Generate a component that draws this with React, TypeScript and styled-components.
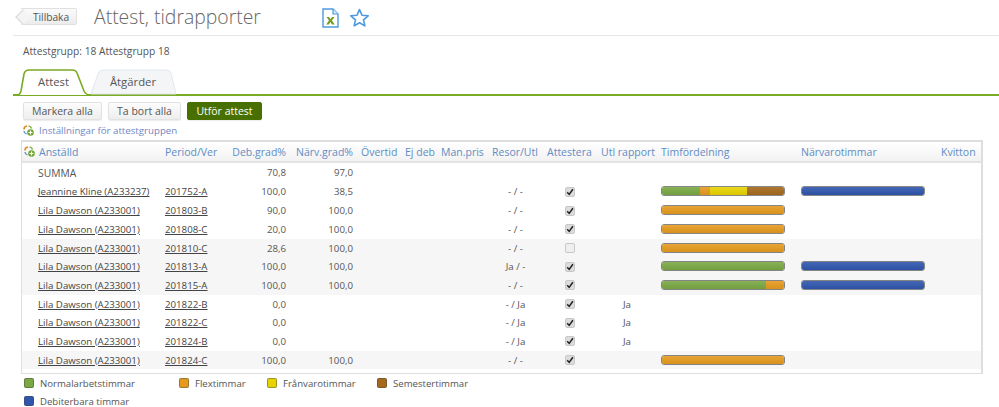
import React from "react";
import styled, { createGlobalStyle } from "styled-components";

const Global = createGlobalStyle`
  html, body { margin: 0; padding: 0; background: #fff; }
  body { font-family: "Open Sans", "Liberation Sans", sans-serif; color: #555; overflow: hidden; }
`;
const Page = styled.div`
  width: 999px; height: 407px; overflow: hidden; display: flex; flex-direction: column; padding-left: 13px; box-sizing: border-box;
  & > * { flex-shrink: 0; }
`;
const Header = styled.header`
  height: 36px; box-sizing: border-box; border-bottom: 1px solid #e6e6e6; display: flex; align-items: center; padding-left: 8px;
`;
const BackButton = styled.button`
  position: relative; width: 56px; height: 17px; margin: 0 17px 2px 0; padding: 0 0 0 5px; border: 1px solid #e0e0e0; border-left: none; border-radius: 0 2px 2px 0;
  background: linear-gradient(#fbfbfb, #ececec); font: 10.2px "Open Sans", sans-serif; color: #555;
  &::before { content: ""; position: absolute; left: -4px; top: 2px; width: 11px; height: 11px; border-left: 1px solid #d6d6d6; border-bottom: 1px solid #d6d6d6; background: #f4f4f4; transform: rotate(45deg) scale(.9); z-index: 0; }
  span { position: relative; }
`;
const Title = styled.h1`
  margin: 0 0 1px; width: 228px; font: 300 19.4px/28px "Open Sans", sans-serif; color: #666; white-space: nowrap;
`;
const HeaderIcon = styled.svg<{ $gap?: number }>`
  display: block; margin-right: ${p => p.$gap ?? 0}px;
`;
const GroupLine = styled.div`
  height: 33px; padding: 8px 0 0 10px; box-sizing: border-box; font-size: 10.2px; line-height: 14px; color: #555;
`;
const TabBar = styled.div`
  display: flex; height: 27px; border-bottom: 2px solid #7aab24; box-sizing: border-box;
`;
const Tab = styled.div<{ $active?: boolean }>`
  position: relative; width: ${p => (p.$active ? "78px" : "86px")}; height: 27px; display: flex; align-items: center; justify-content: center;
  font-size: 11.3px; color: #555; padding: ${p => (p.$active ? "0 0 2px 3px" : "0 0 2px 0")}; box-sizing: border-box; margin-left: ${p => (p.$active ? "0" : "-1px")};
  span { position: relative; }
  svg { position: absolute; left: 0; top: 0; }
`;
const Toolbar = styled.div`
  display: flex; gap: 6px; padding: 6px 0 0 10px; height: 18px;
`;
const ActionButton = styled.button<{ $w: number; $primary?: boolean }>`
  width: ${p => p.$w}px; height: 18px; padding: 0; border-radius: 2px; font: 10.5px "Open Sans", sans-serif;
  border: 1px solid ${p => (p.$primary ? "#477000" : "#e2e2e2")};
  color: ${p => (p.$primary ? "#fff" : "#555")};
  background: ${p => (p.$primary ? "#477000" : "linear-gradient(#fcfcfc, #eeeeee)")};
  box-shadow: 0 1px 1px rgba(0,0,0,.08);
`;
const SettingsLink = styled.div`
  display: flex; align-items: center; gap: 5px; padding-left: 10px; height: 19px; margin-top: 1px; font-size: 9.7px; color: #6f87c4;
`;
const Table = styled.div`
  width: 962px; margin: 0 0 0 8px; border: 1px solid #dedede; border-top-width: 2px; border-right-width: 2px; box-sizing: border-box; height: 234px;
`;
const columns = "143px 63px 62px 67px 44px 36px 51px 55px 54px 60px 140px 140px 1fr";
const HeadRow = styled.div`
  display: grid; grid-template-columns: ${columns}; height: 21px; align-items: center; border-bottom: 2px solid #e4e4e4; background: linear-gradient(#ffffff, #f2f2f2);
  font-size: 10.5px; color: #5f8cc4; box-sizing: border-box;
`;
const Row = styled.div<{ $shaded?: boolean; $sum?: boolean }>`
  display: grid; grid-template-columns: ${columns}; height: ${p => (p.$sum ? "19.6px" : "18.7px")}; align-items: center; background: ${p => (p.$shaded ? "#f6f6f6" : "#fff")};
  font-size: 9.7px; color: #555;
`;
const Cell = styled.div<{ $align?: "left" | "right" | "center" }>`
  padding: 0 4px; text-align: ${p => p.$align ?? "left"}; white-space: nowrap; box-sizing: border-box; min-width: 0;
`;
const NameCell = styled(Cell)`
  padding-left: 16px; display: flex; align-items: center; gap: 4px;
`;
const HeadName = styled(NameCell)`
  padding-left: 2px;
`;
const PeriodCell = styled(Cell)`
  padding-left: 0;
`;
const SumLabel = styled(Cell)`
  padding-left: 16px; font-size: 10.3px;
`;
const RowLink = styled.a`
  color: #444; text-decoration: underline;
`;
const Box = styled.span<{ $checked?: boolean }>`
  display: block; width: 10px; height: 10px; margin: 0 auto; border-radius: 2px; border: 1px solid #c8c8c8; background: ${p => (p.$checked ? "#dcdcdc" : "#efefef")}; box-sizing: border-box; position: relative;
  svg { position: absolute; left: 0; top: 0; }
`;
const Bar = styled.div`
  display: flex; width: 124px; height: 10px; border-radius: 3px; overflow: hidden; border: 1px solid rgba(70,70,70,.65); box-sizing: border-box; margin-top: -1px;
`;
const Seg = styled.div<{ $c: string }>`
  background: ${p => p.$c}; background-image: linear-gradient(rgba(255,255,255,.1), rgba(0,0,0,.06)); height: 100%;
`;
const Legend = styled.div`
  display: grid; grid-template-columns: 155px 88px 110px 1fr; grid-auto-rows: 18px; padding-left: 11px; align-items: center; font-size: 9.6px; color: #555; height: 36px;
`;
const LegendItem = styled.div`
  display: flex; align-items: center; gap: 6px;
`;
const Swatch = styled.span<{ $c: string }>`
  width: 10px; height: 10px; border-radius: 2px; background: ${p => p.$c}; border: 1px solid rgba(70,70,70,.45); box-sizing: border-box; display: block;
`;

const G = "#7aa843", O = "#e59a1e", Y = "#e8d300", B = "#a5691c", N = "#2f55ad";
type S = [string, number];
type RowData = { name: string; period: string; deb: string; narv: string; resor: string; check: boolean; utl?: string; tim?: S[]; nar?: boolean; shaded?: boolean };
const L = "Lila Dawson (A233001)";
const rows: RowData[] = [
  { name: "Jeannine Kline (A233237)", period: "201752-A", deb: "100,0", narv: "38,5", resor: "- / -", check: true, tim: [[G, 31], [O, 8], [Y, 30.5], [B, 30.5]], nar: true },
  { name: L, period: "201803-B", deb: "90,0", narv: "100,0", resor: "- / -", check: true, tim: [[O, 100]] },
  { name: L, period: "201808-C", deb: "20,0", narv: "100,0", resor: "- / -", check: true, tim: [[O, 100]] },
  { name: L, period: "201810-C", deb: "28,6", narv: "100,0", resor: "- / -", check: false, tim: [[O, 100]], shaded: true },
  { name: L, period: "201813-A", deb: "100,0", narv: "100,0", resor: "Ja / -", check: true, tim: [[G, 100]], nar: true, shaded: true },
  { name: L, period: "201815-A", deb: "100,0", narv: "100,0", resor: "- / -", check: true, tim: [[G, 85], [O, 15]], nar: true, shaded: true },
  { name: L, period: "201822-B", deb: "0,0", narv: "", resor: "- / Ja", check: true, utl: "Ja" },
  { name: L, period: "201822-C", deb: "0,0", narv: "", resor: "- / Ja", check: true, utl: "Ja" },
  { name: L, period: "201824-B", deb: "0,0", narv: "", resor: "- / Ja", check: true, utl: "Ja" },
  { name: L, period: "201824-C", deb: "100,0", narv: "100,0", resor: "- / -", check: true, tim: [[O, 100]], shaded: true },
];

const SettingsIcon = () => (
  <svg width="11" height="11" viewBox="0 0 11 11">
    <path d="M1 4.5A3.5 3.5 0 0 1 4 1" fill="none" stroke="#e08a2a" strokeWidth="1.6" />
    <path d="M5.5 1A3.5 3.5 0 0 1 8.6 3.5" fill="none" stroke="#8fb24a" strokeWidth="1.6" />
    <path d="M1 6A3.5 3.5 0 0 0 3.5 9" fill="none" stroke="#6f9fd0" strokeWidth="1.6" />
    <circle cx="7.5" cy="7.5" r="3.3" fill="#6fa52c" />
    <path d="M7.5 5.5v4M5.5 7.5h4" stroke="#fff" strokeWidth="1.2" />
  </svg>
);
const Check = () => (
  <svg width="8" height="8" viewBox="0 0 8 8"><path d="M1.2 4.2 3.2 6.4 6.9 1.2" fill="none" stroke="#222" strokeWidth="1.5" /></svg>
);
const Meter = ({ segs }: { segs: S[] }) => (
  <Bar>{segs.map(([c, w], i) => <Seg key={i} $c={c} style={{ width: `${w}%` }} />)}</Bar>
);

export default function App() {
  return (
    <Page>
      <Global />
      <Header>
        <BackButton><span>Tillbaka</span></BackButton>
        <Title>Attest, tidrapporter</Title>
        <HeaderIcon $gap={10} width="17" height="20" viewBox="0 0 17 20">
          <path d="M1 1h10l5 5v13H1z" fill="#fff" stroke="#4d9ae0" strokeWidth="1.4" />
          <path d="M11 1v5h5" fill="#dcebf8" stroke="#4d9ae0" strokeWidth="1.2" />
          <path d="M4.5 9h2.6l1.4 2.3L10 9h2.5l-2.6 3.6 2.8 3.9H10l-1.6-2.5-1.6 2.5H4.2L7 12.6z" fill="#6f9e1e" />
        </HeaderIcon>
        <HeaderIcon width="21" height="20" viewBox="0 0 21 20">
          <path d="M10.5 1.6 13 7.2l6.2.6-4.7 4.1 1.4 6-5.4-3.2-5.4 3.2 1.4-6L1.8 7.8 8 7.2z" fill="#fff" stroke="#4d9ae0" strokeWidth="1.6" strokeLinejoin="round" />
        </HeaderIcon>
      </Header>
      <GroupLine>Attestgrupp: 18 Attestgrupp 18</GroupLine>
      <TabBar>
        <Tab $active>
          <svg width="78" height="27" viewBox="0 0 78 27">
            <path d="M0 26H4Q7 26 8 22L11 5Q12 1 16 1H59Q63 1 64 4L71 22Q73 26 77 26H78" fill="#fff" stroke="#7aab24" strokeWidth="1.6" />
          </svg>
          <span>Attest</span>
        </Tab>
        <Tab>
          <svg width="86" height="26" viewBox="0 0 86 26">
            <path d="M1 25 L8 5Q9 1 13 1H76Q80 1 81 4L86 25z" fill="#f3f5f7" stroke="#e2e8ee" />
          </svg>
          <span>Åtgärder</span>
        </Tab>
      </TabBar>
      <Toolbar>
        <ActionButton $w={79}>Markera alla</ActionButton>
        <ActionButton $w={73}>Ta bort alla</ActionButton>
        <ActionButton $w={75} $primary>Utför attest</ActionButton>
      </Toolbar>
      <SettingsLink><SettingsIcon />Inställningar för attestgruppen</SettingsLink>
      <Table>
        <HeadRow>
          <HeadName><SettingsIcon />Anställd</HeadName>
          <PeriodCell>Period/Ver</PeriodCell>
          <Cell $align="right">Deb.grad%</Cell>
          <Cell $align="right">Närv.grad%</Cell>
          <Cell>Övertid</Cell>
          <Cell>Ej deb</Cell>
          <Cell>Man.pris</Cell>
          <Cell>Resor/Utl</Cell>
          <Cell>Attestera</Cell>
          <Cell>Utl rapport</Cell>
          <Cell>Timfördelning</Cell>
          <Cell>Närvarotimmar</Cell>
          <Cell>Kvitton</Cell>
        </HeadRow>
        <Row $sum>
          <SumLabel>SUMMA</SumLabel>
          <Cell />
          <Cell $align="right">70,8</Cell>
          <Cell $align="right">97,0</Cell>
        </Row>
        {rows.map((r, i) => (
          <Row key={i} $shaded={r.shaded}>
            <NameCell><RowLink>{r.name}</RowLink></NameCell>
            <PeriodCell><RowLink>{r.period}</RowLink></PeriodCell>
            <Cell $align="right">{r.deb}</Cell>
            <Cell $align="right">{r.narv}</Cell>
            <Cell /><Cell /><Cell />
            <Cell $align="center">{r.resor}</Cell>
            <Cell $align="center"><Box $checked={r.check}>{r.check && <Check />}</Box></Cell>
            <Cell $align="center">{r.utl}</Cell>
            <Cell>{r.tim && <Meter segs={r.tim} />}</Cell>
            <Cell>{r.nar && <Meter segs={[[N, 100]]} />}</Cell>
            <Cell />
          </Row>
        ))}
      </Table>
      <Legend>
        <LegendItem><Swatch $c={G} />Normalarbetstimmar</LegendItem>
        <LegendItem><Swatch $c={O} />Flextimmar</LegendItem>
        <LegendItem><Swatch $c={Y} />Frånvarotimmar</LegendItem>
        <LegendItem><Swatch $c={B} />Semestertimmar</LegendItem>
        <LegendItem><Swatch $c={N} />Debiterbara timmar</LegendItem>
      </Legend>
    </Page>
  );
}
